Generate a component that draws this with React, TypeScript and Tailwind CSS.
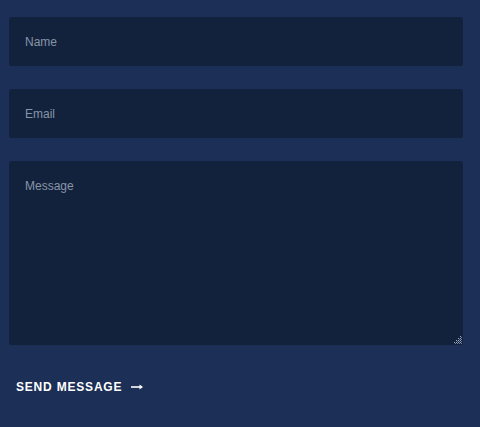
const gripDots: [number, number][] = [];
for (let y = 0; y < 8; y += 2) {
  for (let x = 0; x < 8; x += 2) {
    if (x + y >= 6) gripDots.push([x, y]);
  }
}

export default function App() {
  return (
    <div className="min-h-[427px] w-full bg-[#1c2f56] pt-[17px] pl-[9px] font-['Liberation_Sans',Arial,sans-serif]">
      <form className="flex w-[454px] flex-col gap-[23px]" onSubmit={(e) => e.preventDefault()}>
        <input
          type="text"
          placeholder="Name"
          className="h-[49px] rounded-[2px] bg-[#13223c] px-4 text-[12px] text-white outline-none placeholder:text-[#8794a8]"
        />
        <input
          type="email"
          placeholder="Email"
          className="h-[49px] rounded-[2px] bg-[#13223c] px-4 text-[12px] text-white outline-none placeholder:text-[#8794a8]"
        />
        <div className="relative">
          <textarea
            placeholder="Message"
            className="block h-[184px] w-full resize-none rounded-[2px] bg-[#13223c] px-4 pt-[16px] text-[12px] text-white outline-none placeholder:text-[#8794a8]"
          />
          {/* resize grip */}
          <svg className="pointer-events-none absolute right-[1px] bottom-[1px]" width="8" height="8" viewBox="0 0 8 8">
            {gripDots.map(([x, y]) => (
              <rect key={`${x}-${y}`} x={x} y={y} width="1" height="1" fill="#9aa8c0" />
            ))}
            {gripDots.map(([x, y]) => (
              <rect key={`b${x}-${y}`} x={x + 1} y={y + 1} width="1" height="1" fill="#6f7f9c" />
            ))}
          </svg>
        </div>
        <button
          type="submit"
          className="mt-[10px] flex items-center gap-[9px] self-start pl-[7px] text-[12px] font-bold tracking-[0.8px] text-white"
        >
          SEND MESSAGE
          <svg width="12" height="6" viewBox="0 0 12 6" fill="none">
            <path d="M0 3h10.5" stroke="white" strokeWidth="1.6" />
            <path d="M8.5 0.5 L12 3 L8.5 5.5 Z" fill="white" />
          </svg>
        </button>
      </form>
    </div>
  );
}
